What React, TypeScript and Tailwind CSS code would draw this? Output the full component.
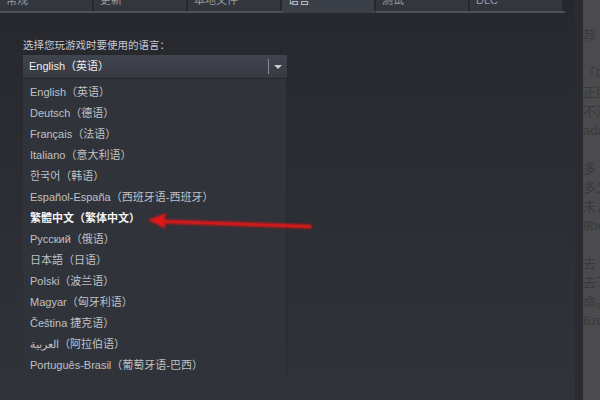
import React from 'react';

const tabs = ['常规', '更新', '本地文件', '语言', '测试', 'DLC'];

const languages = [
  'English（英语）',
  'Deutsch（德语）',
  'Français（法语）',
  'Italiano（意大利语）',
  '한국어（韩语）',
  'Español-España（西班牙语-西班牙）',
  '繁體中文（繁体中文）',
  'Русский（俄语）',
  '日本語（日语）',
  'Polski（波兰语）',
  'Magyar（匈牙利语）',
  'Čeština 捷克语）',
  'العربية（阿拉伯语）',
  'Português-Brasil（葡萄牙语-巴西）',
];

const sideText = ['荐', '', '「P', '正版', '不满', 'ada', '', '多', '多少', '未，', '9bo', '', '去', '去下', '命。', '6zu'];

const App: React.FC = () => {
  return (
    <div
      className="relative flex w-[600px] h-[400px] overflow-hidden bg-[#2b2d33]"
      style={{ fontFamily: '"Liberation Sans", "Noto Sans CJK SC", sans-serif' }}
    >
      {/* dialog */}
      <div className="flex flex-col w-[575px] bg-gradient-to-b from-[#27282d] to-[#30333a]">
        {/* tabs, cut off at the top */}
        <div className="flex gap-[2px] h-[11px] overflow-hidden">
          {tabs.map((t, i) => (
            <div
              key={t}
              className={
                'w-[92px] h-full pl-[6px] text-[11px] leading-none ' +
                (i === 3 ? 'bg-[#3b3f47] text-[#d0d2d6]' : 'bg-[#33363d] text-[#9a9da3]')
              }
            >
              <div className="-mt-[5px]">{t}</div>
            </div>
          ))}
        </div>
        <div className="flex h-[2px]">
          <div className="w-[283px] bg-[#4c5058]" />
          <div className="w-[93px] bg-[#3b3f47]" />
          <div className="w-[189px] bg-[#4c5058]" />
        </div>

        <div className="pl-[23px] pt-[25px]">
          <div className="text-[10.5px] text-[#c8cace] leading-[14px]">选择您玩游戏时要使用的语言：</div>

          <div className="mt-[3px] w-[264px]">
            {/* select header */}
            <div className="flex items-center h-[24px] bg-gradient-to-b from-[#40444d] to-[#373a42] border-b border-[#25272c]">
              <span className="flex-1 pl-[6px] text-[11px] text-[#eceef0]">English（英语）</span>
              <div className="w-px h-[15px] bg-[#868a92]" />
              <div className="w-[18px] flex justify-center">
                <div className="w-0 h-0 border-l-[4px] border-r-[4px] border-t-[4px] border-l-transparent border-r-transparent border-t-[#c9cbd0]" />
              </div>
            </div>
            {/* list */}
            <div className="pt-[3px] pb-[2px] bg-[#30333a] border-r border-[#262830]">
              {languages.map((l, i) => (
                <div
                  key={l}
                  className={
                    'h-[21px] flex items-center pl-[7px] text-[11px] ' +
                    (i === 6 ? 'text-[#f4f4f4] font-bold' : 'text-[#bfc1c6]')
                  }
                >
                  {l}
                </div>
              ))}
            </div>
          </div>
        </div>
      </div>

      {/* right edge */}
      <div className="w-[8px] bg-[#2a2c32]" />
      <div className="flex-1 bg-[#4b4b4d] overflow-hidden pt-[26px]">
        {sideText.map((s, i) => (
          <div key={i} className="h-[19px] text-[13px] leading-[19px] text-[#38393b] whitespace-nowrap">
            {s}
          </div>
        ))}
      </div>

      {/* red arrow annotation */}
      <svg className="absolute left-0 top-0 pointer-events-none" width="600" height="400">
        <defs>
          <filter id="glow" x="-10%" y="-50%" width="120%" height="200%">
            <feGaussianBlur stdDeviation="0.8" />
          </filter>
        </defs>
        <g filter="url(#glow)">
          <path d="M162 221.5 L310 226.5" stroke="#e01414" strokeWidth="4" strokeLinecap="round" />
          <path d="M148 220 L166 213 L164 221.5 L166 229 Z" fill="#e41616" />
        </g>
      </svg>
    </div>
  );
};

export default App;
